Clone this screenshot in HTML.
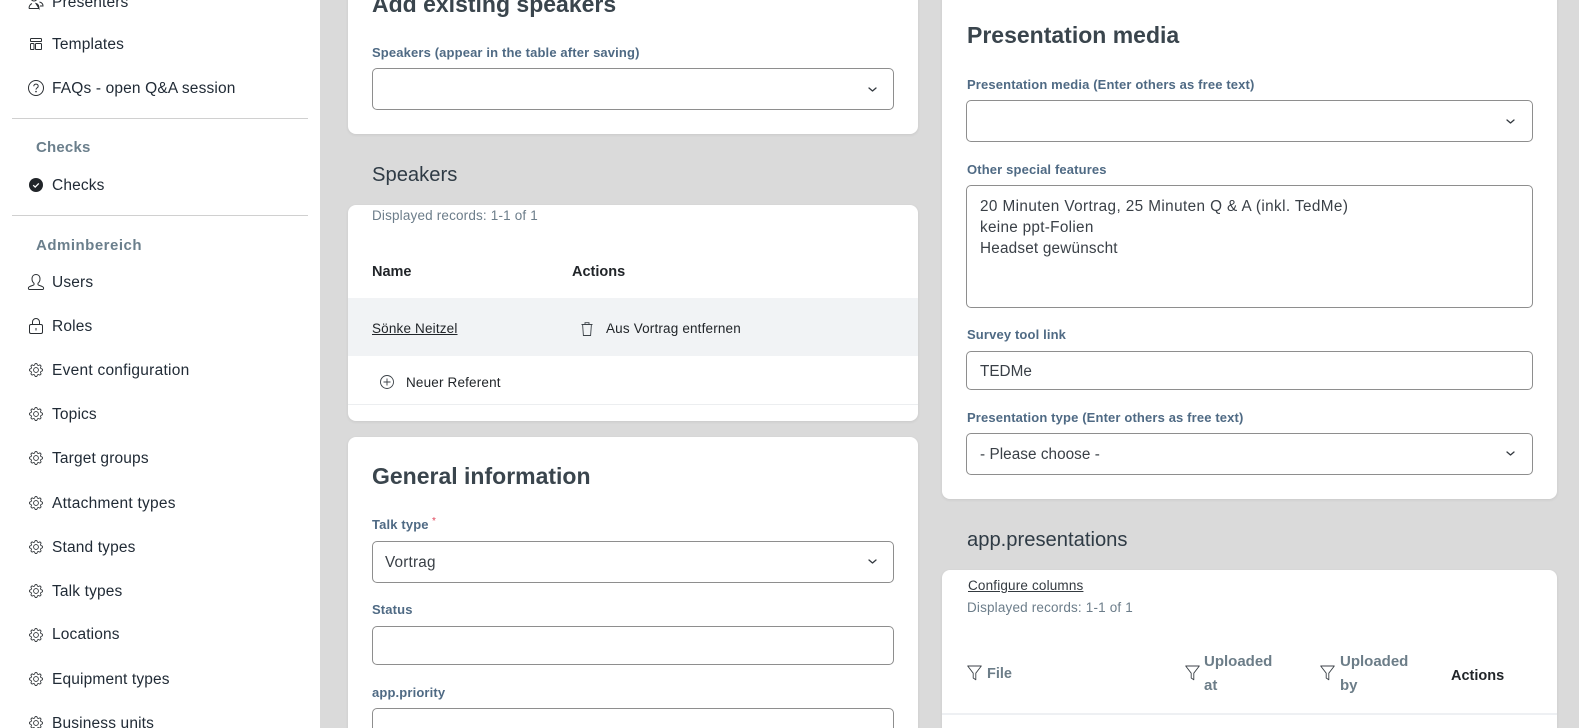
<!DOCTYPE html>
<html lang="en">
<head>
<meta charset="utf-8">
<title>Talk</title>
<style>
html,body{margin:0;padding:0;width:1579px;height:728px;overflow:hidden;background:#dadada}
body{position:relative;font-family:"Liberation Sans",sans-serif;color:#212529}
.t{position:absolute;white-space:nowrap;line-height:20px;height:20px}
.side{position:absolute;left:0;top:0;width:320px;height:728px;background:#fff}
.hr{position:absolute;left:12px;width:296px;height:1px;background:#d0d0d0}
.i{font-size:15.5px;letter-spacing:.15px;left:52px;color:#212b36}
.sec{font-size:15px;letter-spacing:.2px;font-weight:700;left:36px;color:#6b7f8c}
.ic{position:absolute;width:16px;height:16px;left:28px;overflow:visible}
.card{position:absolute;background:#fff;border-radius:8px;box-shadow:0 1px 3px rgba(0,0,0,.08)}
.inp{position:absolute;box-sizing:border-box;background:#fff;border:1px solid #8e8e8e;border-radius:5px}
.lab{font-size:13px;letter-spacing:.14px;font-weight:700;color:#4f6a84}
.h1{font-size:23px;font-weight:700;color:#3a454d;line-height:30px;height:30px}
.h2{font-size:20.2px;color:#2f3b45;line-height:28px;height:28px}
.val{font-size:15.3px;letter-spacing:.2px;color:#3a4047}
.small{font-size:13.5px;letter-spacing:.17px}
.muted{color:#6c7d8a}
.th{font-size:14.5px;font-weight:700;color:#212529}
.thm{font-weight:700;color:#6c7d88}
.chev{position:absolute;width:9px;height:5px}
svg{display:block}
</style>
</head>
<body>
<svg width="0" height="0" style="position:absolute">
<symbol id="gear" viewBox="0 0 16 16"><path fill="#2b2f33" d="M8 4.754a3.246 3.246 0 1 0 0 6.492 3.246 3.246 0 0 0 0-6.492zM5.754 8a2.246 2.246 0 1 1 4.492 0 2.246 2.246 0 0 1-4.492 0z"/><path fill="#2b2f33" d="M9.796 1.343c-.527-1.79-3.065-1.79-3.592 0l-.094.319a.873.873 0 0 1-1.255.52l-.292-.16c-1.64-.892-3.433.902-2.54 2.541l.159.292a.873.873 0 0 1-.52 1.255l-.319.094c-1.79.527-1.79 3.065 0 3.592l.319.094a.873.873 0 0 1 .52 1.255l-.16.292c-.892 1.64.901 3.434 2.541 2.54l.292-.159a.873.873 0 0 1 1.255.52l.094.319c.527 1.79 3.065 1.79 3.592 0l.094-.319a.873.873 0 0 1 1.255-.52l.292.16c1.64.893 3.434-.902 2.54-2.541l-.159-.292a.873.873 0 0 1 .52-1.255l.319-.094c1.79-.527 1.79-3.065 0-3.592l-.319-.094a.873.873 0 0 1-.52-1.255l.16-.292c.893-1.64-.902-3.433-2.541-2.54l-.292.159a.873.873 0 0 1-1.255-.52l-.094-.319zm-2.633.283c.246-.835 1.428-.835 1.674 0l.094.319a1.873 1.873 0 0 0 2.693 1.115l.291-.16c.764-.415 1.6.42 1.184 1.185l-.159.292a1.873 1.873 0 0 0 1.116 2.692l.318.094c.835.246.835 1.428 0 1.674l-.319.094a1.873 1.873 0 0 0-1.115 2.693l.16.291c.415.764-.42 1.6-1.185 1.184l-.291-.159a1.873 1.873 0 0 0-2.693 1.116l-.094.318c-.246.835-1.428.835-1.674 0l-.094-.319a1.873 1.873 0 0 0-2.692-1.115l-.292.16c-.764.415-1.6-.42-1.184-1.185l.159-.291A1.873 1.873 0 0 0 1.945 8.93l-.319-.094c-.835-.246-.835-1.428 0-1.674l.319-.094A1.873 1.873 0 0 0 3.06 4.377l-.16-.292c-.415-.764.42-1.6 1.185-1.184l.292.159a1.873 1.873 0 0 0 2.692-1.115l.094-.319z"/></symbol>
<symbol id="chev" viewBox="0 0 9 5"><path d="M1 1l3.500 3L8 1" fill="none" stroke="#343a40" stroke-width="1.300" stroke-linecap="round" stroke-linejoin="round"/></symbol>
<symbol id="funnel" viewBox="0 0 15 16"><path d="M.7 1h13.600L8.800 8.200v6.600L6.200 13V8.200z" fill="none" stroke="#3c4248" stroke-width=".9" stroke-linejoin="round"/></symbol>
</svg>

<div class="side">
  <svg class="ic" style="top:-6px" viewBox="0 0 16 16"><circle cx="6" cy="4" r="3" fill="none" stroke="#2b2f33"/><path d="M1 14.5c0-3 2-4.500 3-5M8 9.500c2 .5 3 2 3 5zM1 14.500h10M10 2c2 0 3 1 2.500 3M11.500 8c2 .5 3.500 1.500 3.500 4h-3" fill="none" stroke="#2b2f33"/></svg>
  <div class="t i" style="top:-7px">Presenters</div>

  <svg class="ic" style="top:38px;left:30px;width:12px;height:12px" viewBox="0 0 12 12"><rect x=".5" y=".5" width="11" height="3" rx=".8" fill="none" stroke="#2b2f33"/><rect x=".5" y="5.500" width="3.500" height="6" rx=".8" fill="none" stroke="#2b2f33"/><rect x="5.500" y="5.500" width="6" height="6" rx=".8" fill="none" stroke="#2b2f33"/></svg>
  <div class="t i" style="top:35px">Templates</div>

  <svg class="ic" style="top:80px" viewBox="0 0 16 16"><circle cx="8" cy="8" r="7.500" fill="none" stroke="#2b2f33"/><path d="M5.800 6.200C5.800 4.900 6.800 4.100 8 4.100s2.200.8 2.200 2c0 1.800-2.200 1.800-2.200 3.500" fill="none" stroke="#2b2f33"/><circle cx="8" cy="11.600" r=".8" fill="#2b2f33"/></svg>
  <div class="t i" style="top:79px">FAQs - open Q&amp;A session</div>

  <div class="hr" style="top:118px"></div>
  <div class="t sec" style="top:138px">Checks</div>
  <svg class="ic" style="top:178px;left:29px;width:14px;height:14px" viewBox="0 0 14 14"><circle cx="7" cy="7" r="7" fill="#212529"/><path d="M4.200 7.200l2 1.900 3.600-3.700" fill="none" stroke="#fff" stroke-width="1.300"/></svg>
  <div class="t i" style="top:176px">Checks</div>
  <div class="hr" style="top:215px"></div>
  <div class="t sec" style="top:236px;letter-spacing:.5px">Adminbereich</div>

  <svg class="ic" style="top:274px" viewBox="0 0 16 16"><path d="M8 .5c2.500 0 4 1.800 4 4.300 0 2-.9 3.700-2 4.500v1.300c0 .9 4.700 1.200 5.500 3 .3.800 0 1.900-.8 1.900H1.300c-.8 0-1.100-1.100-.8-1.900.8-1.800 5.500-2.100 5.500-3V9.300C4.900 8.500 4 6.800 4 4.800 4 2.300 5.500.5 8 .5z" fill="none" stroke="#2b2f33"/></svg>
  <div class="t i" style="top:273px">Users</div>

  <svg class="ic" style="top:318px;left:29px;width:14px;height:16px" viewBox="0 0 14 16"><rect x=".5" y="6.500" width="13" height="9" rx="1.500" fill="none" stroke="#2b2f33"/><path d="M3.500 6.500V4a3.500 3.500 0 0 1 7 0v2.500" fill="none" stroke="#2b2f33"/><rect x="6.500" y="10" width="1" height="2.500" fill="#2b2f33"/></svg>
  <div class="t i" style="top:317px">Roles</div>

  <svg class="ic" style="top:363px;left:29px;width:14px;height:14px"><use href="#gear"/></svg>
  <div class="t i" style="top:361px;letter-spacing:.25px">Event configuration</div>
  <svg class="ic" style="top:407px;left:29px;width:14px;height:14px"><use href="#gear"/></svg>
  <div class="t i" style="top:405px">Topics</div>
  <svg class="ic" style="top:451px;left:29px;width:14px;height:14px"><use href="#gear"/></svg>
  <div class="t i" style="top:449px">Target groups</div>
  <svg class="ic" style="top:496px;left:29px;width:14px;height:14px"><use href="#gear"/></svg>
  <div class="t i" style="top:494px;letter-spacing:.25px">Attachment types</div>
  <svg class="ic" style="top:540px;left:29px;width:14px;height:14px"><use href="#gear"/></svg>
  <div class="t i" style="top:538px">Stand types</div>
  <svg class="ic" style="top:584px;left:29px;width:14px;height:14px"><use href="#gear"/></svg>
  <div class="t i" style="top:582px">Talk types</div>
  <svg class="ic" style="top:628px;left:29px;width:14px;height:14px"><use href="#gear"/></svg>
  <div class="t i" style="top:625px">Locations</div>
  <svg class="ic" style="top:672px;left:29px;width:14px;height:14px"><use href="#gear"/></svg>
  <div class="t i" style="top:670px">Equipment types</div>
  <svg class="ic" style="top:716px;left:29px;width:14px;height:14px"><use href="#gear"/></svg>
  <div class="t i" style="top:714px">Business units</div>
</div>

<!-- middle column -->
<div class="card" style="left:348px;top:-20px;width:570px;height:154px"></div>
<div class="t h1" style="left:372px;top:-11px">Add existing speakers</div>
<div class="t lab" style="left:372px;top:43px">Speakers (appear in the table after saving)</div>
<div class="inp" style="left:372px;top:68px;width:522px;height:42px"></div>
<svg class="chev" style="left:868px;top:87px"><use href="#chev"/></svg>

<div class="t h2" style="left:372px;top:161px">Speakers</div>

<div class="card" style="left:348px;top:205px;width:570px;height:216px;overflow:hidden">
  <div style="position:absolute;left:0;top:93px;width:570px;height:58px;background:#f1f3f5"></div>
  <div style="position:absolute;left:0;top:199px;width:570px;height:1px;background:#eceef0"></div>
</div>
<div class="t small muted" style="left:372px;top:206px">Displayed records: 1-1 of 1</div>
<div class="t th" style="left:372px;top:262px">Name</div>
<div class="t th" style="left:572px;top:262px">Actions</div>
<div class="t small" style="left:372px;top:319px;text-decoration:underline">Sönke Neitzel</div>
<svg class="ic" style="left:581px;top:322px;width:12px;height:14px" viewBox="0 0 12 14"><path d="M.5 2.500h11M4 2.500V.7h4v1.800M1.600 2.500l.8 11h7.200l.8-11" fill="none" stroke="#3c4248" stroke-width=".9"/></svg>
<div class="t small" style="left:606px;top:319px">Aus Vortrag entfernen</div>
<svg class="ic" style="left:380px;top:375px;width:14px;height:14px" viewBox="0 0 14 14"><circle cx="7" cy="7" r="6.500" fill="none" stroke="#3c4248" stroke-width=".9"/><path d="M7 3.500v7M3.500 7h7" stroke="#3c4248" stroke-width=".9"/></svg>
<div class="t small" style="left:406px;top:373px">Neuer Referent</div>

<div class="card" style="left:348px;top:437px;width:570px;height:320px"></div>
<div class="t h1" style="left:372px;top:461px">General information</div>
<div class="t lab" style="left:372px;top:515px">Talk type</div>
<div class="t" style="left:432px;top:512px;font-size:10px;color:#e0455a">*</div>
<div class="inp" style="left:372px;top:541px;width:522px;height:42px"></div>
<div class="t val" style="left:385px;top:553px">Vortrag</div>
<svg class="chev" style="left:868px;top:559px"><use href="#chev"/></svg>
<div class="t lab" style="left:372px;top:600px">Status</div>
<div class="inp" style="left:372px;top:626px;width:522px;height:39px"></div>
<div class="t lab" style="left:372px;top:683px">app.priority</div>
<div class="inp" style="left:372px;top:708px;width:522px;height:42px"></div>

<!-- right column -->
<div class="card" style="left:942px;top:-20px;width:615px;height:519px"></div>
<div class="t h1" style="left:967px;top:20px">Presentation media</div>
<div class="t lab" style="left:967px;top:75px">Presentation media (Enter others as free text)</div>
<div class="inp" style="left:966px;top:100px;width:567px;height:42px"></div>
<svg class="chev" style="left:1506px;top:119px"><use href="#chev"/></svg>
<div class="t lab" style="left:967px;top:160px">Other special features</div>
<div class="inp" style="left:966px;top:185px;width:567px;height:123px"></div>
<div class="t val" style="left:980px;top:197px;letter-spacing:.4px">20 Minuten Vortrag, 25 Minuten Q &amp; A (inkl. TedMe)</div>
<div class="t val" style="left:980px;top:218px;letter-spacing:.3px">keine ppt-Folien</div>
<div class="t val" style="left:980px;top:239px">Headset gewünscht</div>
<div class="t lab" style="left:967px;top:325px">Survey tool link</div>
<div class="inp" style="left:966px;top:351px;width:567px;height:39px"></div>
<div class="t val" style="left:980px;top:362px;letter-spacing:0">TEDMe</div>
<div class="t lab" style="left:967px;top:408px">Presentation type (Enter others as free text)</div>
<div class="inp" style="left:966px;top:433px;width:567px;height:42px"></div>
<div class="t val" style="left:980px;top:445px;letter-spacing:.05px">- Please choose -</div>
<svg class="chev" style="left:1506px;top:451px"><use href="#chev"/></svg>

<div class="t h2" style="left:967px;top:526px">app.presentations</div>

<div class="card" style="left:942px;top:570px;width:615px;height:180px">
  <div style="position:absolute;left:0;top:143px;width:615px;height:2px;background:#eef0f3"></div>
</div>
<div class="t small" style="left:968px;top:576px;text-decoration:underline;color:#343a40">Configure columns</div>
<div class="t small muted" style="left:967px;top:598px">Displayed records: 1-1 of 1</div>
<svg class="ic" style="left:967px;top:665px;width:15px;height:16px"><use href="#funnel"/></svg>
<div class="t thm" style="left:987px;top:664px;font-size:14.5px">File</div>
<svg class="ic" style="left:1185px;top:665px;width:15px;height:16px"><use href="#funnel"/></svg>
<div class="t thm" style="left:1204px;top:652px;font-size:15px">Uploaded</div>
<div class="t thm" style="left:1204px;top:676px;font-size:15px">at</div>
<svg class="ic" style="left:1320px;top:665px;width:15px;height:16px"><use href="#funnel"/></svg>
<div class="t thm" style="left:1340px;top:652px;font-size:15px">Uploaded</div>
<div class="t thm" style="left:1340px;top:676px;font-size:15px">by</div>
<div class="t th" style="left:1451px;top:666px">Actions</div>
</body>
</html>
